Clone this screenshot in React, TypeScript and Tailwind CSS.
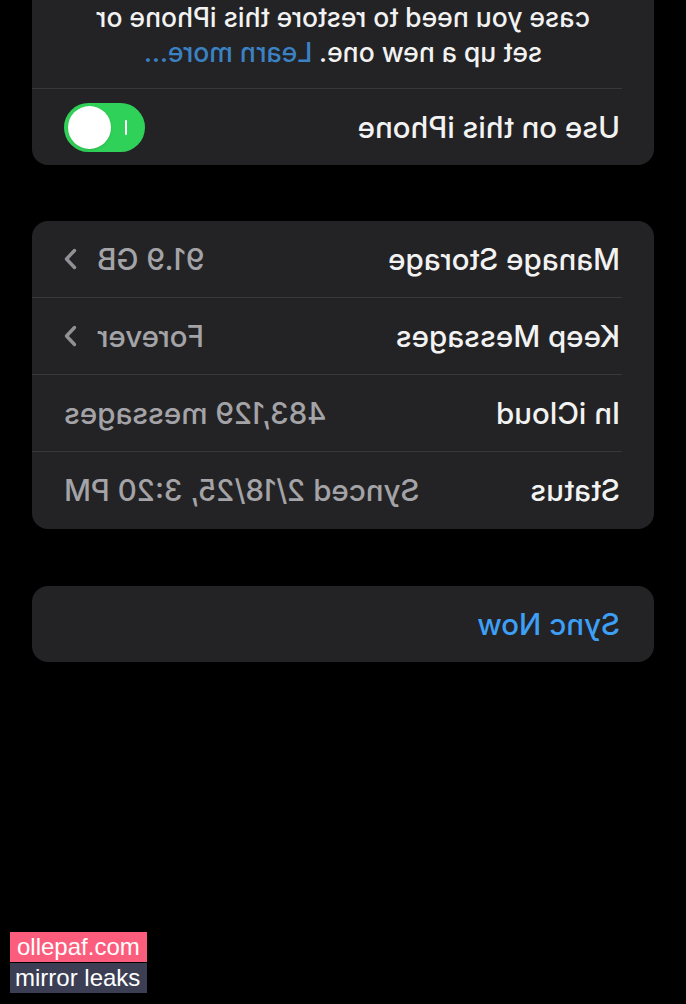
import React from "react";

const font = { fontFamily: "Inter, 'Liberation Sans', sans-serif" };

function Chevron() {
  return (
    <svg width="13" height="22" viewBox="0 0 13 22" fill="none">
      <path d="M2.5 2.5 L10.5 11 L2.5 19.5" stroke="#909096" strokeWidth="3.4" strokeLinecap="round" strokeLinejoin="round" />
    </svg>
  );
}

function Row({ label, value, chevron, last }: { label: string; value: string; chevron?: boolean; last?: boolean }) {
  return (
    <div className="flex flex-col">
      <div className={`flex items-center justify-between pl-[34px] pr-[32px] ${last ? "h-[77px]" : "h-[76px]"}`}>
        <span className="text-[29.5px] font-medium text-[#f2f2f2]">{label}</span>
        <div className="flex items-center gap-[20px]">
          <span className="text-[29.5px] font-medium text-[#a3a3a8]">{value}</span>
          {chevron && <Chevron />}
        </div>
      </div>
      {!last && <div className="ml-[32px] h-px bg-[#38383b]" />}
    </div>
  );
}

export default function App() {
  return (
    <div className="relative h-[1004px] w-[686px] overflow-hidden bg-black" style={font}>
      <div className="[transform:scaleX(-1)]">
        <div className="mx-[32px] mt-[-40px] rounded-[16px] bg-[#232325]">
          <div className="flex flex-col items-center pb-[18px] pt-[40px] text-center text-[26.5px] font-medium leading-[35px] text-[#f2f2f2]">
            <span>case you need to restore this iPhone or</span>
            <span>
              set up a new one. <span className="text-[#3b82c4]">Learn more...</span>
            </span>
          </div>
          <div className="ml-[32px] h-px bg-[#38383b]" />
          <div className="flex h-[76px] items-center justify-between pl-[34px] pr-[32px]">
            <span className="text-[29.5px] font-medium text-[#f2f2f2]">Use on this iPhone</span>
            <div className="relative flex h-[49px] w-[81px] items-center justify-end rounded-full bg-[#30d158] pr-[4px]">
              <div className="absolute left-[18px] top-[17px] h-[15px] w-[2px] rounded bg-white" />
              <div className="h-[43px] w-[43px] rounded-full bg-white shadow" />
            </div>
          </div>
        </div>

        <div className="mx-[32px] mt-[56px] flex flex-col rounded-[16px] bg-[#232325]">
          <Row label="Manage Storage" value="91.9 GB" chevron />
          <Row label="Keep Messages" value="Forever" chevron />
          <Row label="In iCloud" value="483,129 messages" />
          <Row label="Status" value="Synced 2/18/25, 3:20 PM" last />
        </div>

        <div className="mx-[32px] mt-[57px] flex h-[76px] items-center rounded-[16px] bg-[#232325] pl-[34px]">
          <span className="text-[29.5px] font-medium text-[#3d9ff5]">Sync Now</span>
        </div>
      </div>

      <div className="absolute left-[10px] top-[932px] flex flex-col gap-px" style={{ fontFamily: "'Liberation Sans', Arial, sans-serif" }}>
        <div className="flex h-[30px] w-[137px] items-center bg-[#fd5d7c] pl-[7px] text-[24px] text-white">ollepaf.com</div>
        <div className="flex h-[30px] w-[137px] items-center bg-[#3c3f54] pl-[5px] text-[24px] text-white">mirror leaks</div>
      </div>
    </div>
  );
}
